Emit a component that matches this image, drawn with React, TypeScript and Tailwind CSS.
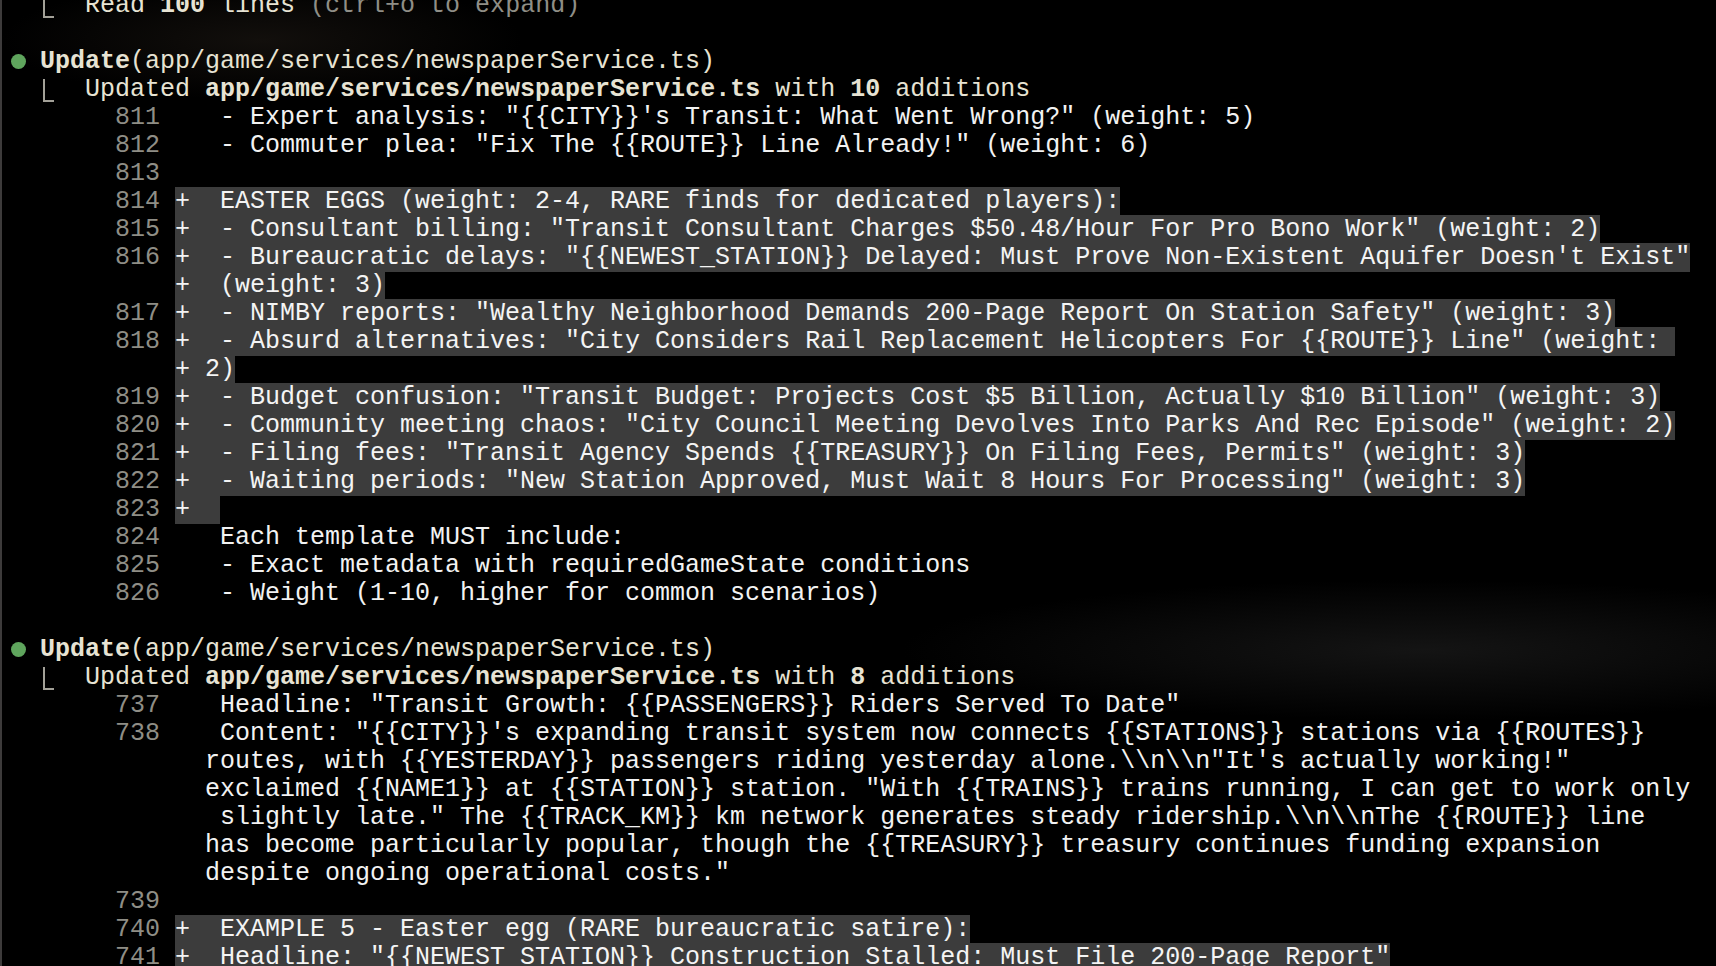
type Row =
  | { kind: 'blank' }
  | { kind: 'read' }
  | { kind: 'update'; count: string }
  | { kind: 'line'; num?: string; add?: boolean; text: string };

const rows: Row[] = [
  { kind: 'read' },
  { kind: 'blank' },
  { kind: 'update', count: '10' },
  { kind: 'line', num: '811', text: ' - Expert analysis: "{{CITY}}\'s Transit: What Went Wrong?" (weight: 5)' },
  { kind: 'line', num: '812', text: ' - Commuter plea: "Fix The {{ROUTE}} Line Already!" (weight: 6)' },
  { kind: 'line', num: '813', text: '' },
  { kind: 'line', num: '814', add: true, text: ' EASTER EGGS (weight: 2-4, RARE finds for dedicated players):' },
  {
    kind: 'line',
    num: '815',
    add: true,
    text: ' - Consultant billing: "Transit Consultant Charges $50.48/Hour For Pro Bono Work" (weight: 2)',
  },
  {
    kind: 'line',
    num: '816',
    add: true,
    text: ' - Bureaucratic delays: "{{NEWEST_STATION}} Delayed: Must Prove Non-Existent Aquifer Doesn\'t Exist"',
  },
  { kind: 'line', add: true, text: ' (weight: 3)' },
  {
    kind: 'line',
    num: '817',
    add: true,
    text: ' - NIMBY reports: "Wealthy Neighborhood Demands 200-Page Report On Station Safety" (weight: 3)',
  },
  {
    kind: 'line',
    num: '818',
    add: true,
    text: ' - Absurd alternatives: "City Considers Rail Replacement Helicopters For {{ROUTE}} Line" (weight: ',
  },
  { kind: 'line', add: true, text: '2)' },
  {
    kind: 'line',
    num: '819',
    add: true,
    text: ' - Budget confusion: "Transit Budget: Projects Cost $5 Billion, Actually $10 Billion" (weight: 3)',
  },
  {
    kind: 'line',
    num: '820',
    add: true,
    text: ' - Community meeting chaos: "City Council Meeting Devolves Into Parks And Rec Episode" (weight: 2)',
  },
  {
    kind: 'line',
    num: '821',
    add: true,
    text: ' - Filing fees: "Transit Agency Spends {{TREASURY}} On Filing Fees, Permits" (weight: 3)',
  },
  {
    kind: 'line',
    num: '822',
    add: true,
    text: ' - Waiting periods: "New Station Approved, Must Wait 8 Hours For Processing" (weight: 3)',
  },
  { kind: 'line', num: '823', add: true, text: ' ' },
  { kind: 'line', num: '824', text: ' Each template MUST include:' },
  { kind: 'line', num: '825', text: ' - Exact metadata with requiredGameState conditions' },
  { kind: 'line', num: '826', text: ' - Weight (1-10, higher for common scenarios)' },
  { kind: 'blank' },
  { kind: 'update', count: '8' },
  { kind: 'line', num: '737', text: ' Headline: "Transit Growth: {{PASSENGERS}} Riders Served To Date"' },
  {
    kind: 'line',
    num: '738',
    text: ' Content: "{{CITY}}\'s expanding transit system now connects {{STATIONS}} stations via {{ROUTES}}',
  },
  {
    kind: 'line',
    text: 'routes, with {{YESTERDAY}} passengers riding yesterday alone.\\\\n\\\\n"It\'s actually working!"',
  },
  {
    kind: 'line',
    text: 'exclaimed {{NAME1}} at {{STATION}} station. "With {{TRAINS}} trains running, I can get to work only',
  },
  {
    kind: 'line',
    text: ' slightly late." The {{TRACK_KM}} km network generates steady ridership.\\\\n\\\\nThe {{ROUTE}} line',
  },
  {
    kind: 'line',
    text: 'has become particularly popular, though the {{TREASURY}} treasury continues funding expansion',
  },
  { kind: 'line', text: 'despite ongoing operational costs."' },
  { kind: 'line', num: '739', text: '' },
  { kind: 'line', num: '740', add: true, text: ' EXAMPLE 5 - Easter egg (RARE bureaucratic satire):' },
  {
    kind: 'line',
    num: '741',
    add: true,
    text: ' Headline: "{{NEWEST_STATION}} Construction Stalled: Must File 200-Page Report"',
  },
];

// the little "⎿" connector in front of tool results
const Elbow = () => (
  <span className="inline-block w-[15px] h-[28px] align-top">
    <span className="block ml-[3px] mt-[3px] w-[11px] h-[23px] border-l-2 border-b-2 border-[#a3a198]" />
  </span>
);

const Dot = () => (
  <span className="inline-block w-[15px] h-[28px] align-top">
    <span className="block mt-[6px] ml-[1px] w-[15px] h-[15px] rounded-full bg-[#5fa55d]" />
  </span>
);

const TermRow = ({ row }: { row: Row }) => {
  if (row.kind === 'blank') return <div className="h-[28px]" />;

  if (row.kind === 'read') {
    return (
      <div className="h-[28px] whitespace-pre text-[#e7e3d3]">
        {'  '}
        <Elbow />
        {'  Read '}
        <span className="font-bold">100</span>
        {' lines '}
        <span className="text-[#8f8e86]">(ctrl+o to expand)</span>
      </div>
    );
  }

  if (row.kind === 'update') {
    return (
      <>
        <div className="h-[28px] whitespace-pre text-[#e7e3d3]">
          <Dot />
          {' '}
          <span className="font-bold">Update</span>
          (app/game/services/newspaperService.ts)
        </div>
        <div className="h-[28px] whitespace-pre text-[#e7e3d3]">
          {'  '}
          <Elbow />
          {'  Updated '}
          <span className="font-bold">app/game/services/newspaperService.ts</span>
          {' with '}
          <span className="font-bold">{row.count}</span>
          {' additions'}
        </div>
      </>
    );
  }

  const gutter = '       ' + (row.num ?? '   ') + ' ';
  return (
    <div className="h-[28px] whitespace-pre">
      <span className="text-[#8f8e86]">{gutter}</span>
      {row.add ? (
        <span className="bg-[#3c3c3c] text-[#f4f4f4]">{'+ ' + row.text}</span>
      ) : (
        <span className="text-[#f2f2f2]">{'  ' + row.text}</span>
      )}
    </div>
  );
};

const App = () => {
  return (
    <div className="w-[1716px] h-[966px] overflow-hidden bg-black border-l-2 border-[#3d3b3b] bg-[radial-gradient(ellipse_520px_70px_at_1420px_650px,#141414,transparent),radial-gradient(ellipse_260px_60px_at_260px_40px,#120f0c,transparent)]">
      <div className="-mt-[8px] pl-[8px] font-['Liberation_Mono',monospace] text-[25px] leading-[28px]">
        {rows.map((row, i) => (
          <TermRow key={i} row={row} />
        ))}
      </div>
    </div>
  );
};

export default App;
